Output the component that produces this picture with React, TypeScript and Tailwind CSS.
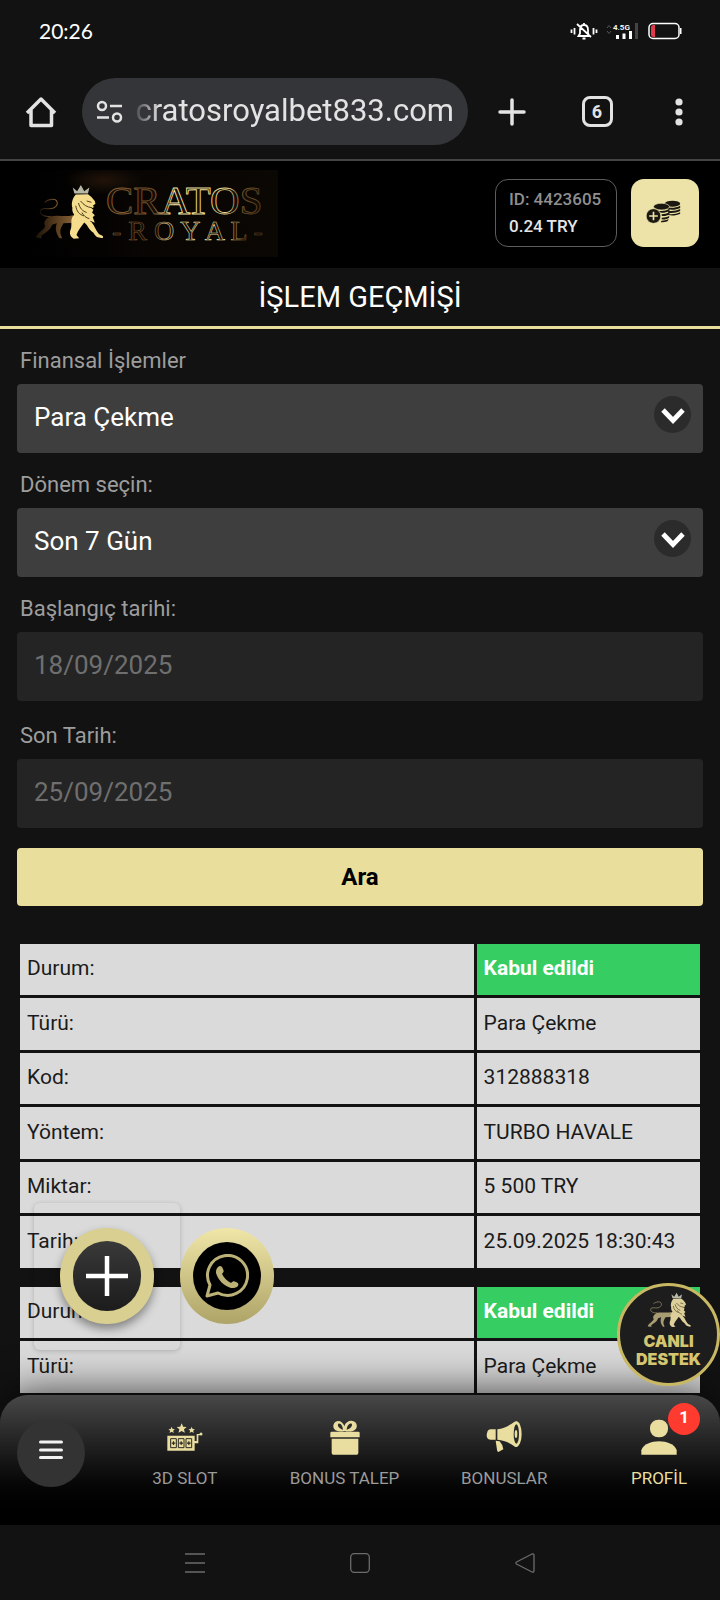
import { useState } from 'react'
import type { ReactNode } from 'react'

const FIELD = 'block h-[69px] w-full rounded-sm pl-[17px] pb-[3px] text-[26px] outline-none'

const TRANSACTIONS = [
  {
    status: 'Kabul edildi',
    rows: [
      ['Türü:', 'Para Çekme'],
      ['Kod:', '312888318'],
      ['Yöntem:', 'TURBO HAVALE'],
      ['Miktar:', '5 500 TRY'],
      ['Tarih:', '25.09.2025 18:30:43'],
    ],
  },
  {
    status: 'Kabul edildi',
    rows: [['Türü:', 'Para Çekme']],
  },
]

function LionShape({ fill, dim }: { fill: string; dim: string }) {
  return (
    <g>
      <path
        d="M52 95 C34 98 18 90 22 78 C27 66 46 78 62 70 C78 60 72 44 56 45 C46 46 38 50 34 54"
        fill="none"
        stroke={dim}
        strokeWidth="3"
      />
      <path
        d="M50 96 C34 104 30 116 36 124 C30 138 12 144 8 158 L26 160 L24 153 C36 142 50 138 56 120 L70 116 C64 132 68 146 78 160 L86 160 L82 150 C78 138 82 128 90 116 L122 114 L118 92 C94 98 74 90 50 96Z"
        fill={dim}
      />
      <path
        d="M122 90 C106 104 118 122 110 136 C106 148 112 156 120 161 L136 160 L128 150 C132 136 144 124 152 112 C162 124 164 134 178 144 C184 156 192 160 206 159 L206 153 L194 147 C184 136 182 124 172 112Z"
        fill={fill}
      />
      <path
        d="M126 31 C116 42 112 58 116 70 C114 84 122 94 132 98 C136 108 150 110 158 120 L160 110 L170 116 L168 108 L182 114 L176 98 L182 92 L174 84 L178 76 L172 72 L180 68 L176 64 L184 58 L182 50 L172 38 L162 30Z"
        fill={fill}
      />
      <path d="M122 28 L117 10 L130 21 L141 3 L151 21 L166 10 L162 28Z" fill="#b9b7a5" />
      <path
        d="M140 50 C150 62 158 68 174 70 M134 56 C138 72 146 80 158 84 M126 64 C128 80 136 90 150 94 M144 84 C150 94 156 100 166 102 M158 50 L172 54"
        fill="none"
        stroke="#30240b"
        strokeWidth="2.5"
      />
    </g>
  )
}

function Logo() {
  return (
    <svg viewBox="0 0 248 87" className="h-[87px] w-[248px]" role="img" aria-label="Cratos Royal">
      <defs>
        <radialGradient id="glow" cx="0.3" cy="0.12" r="0.16">
          <stop offset="0" stopColor="#211409" />
          <stop offset="1" stopColor="#211409" stopOpacity="0" />
        </radialGradient>
        <linearGradient id="plate">
          <stop offset="0" stopColor="#000" />
          <stop offset="0.45" stopColor="#080503" />
          <stop offset="1" stopColor="#0b0703" />
        </linearGradient>
        <linearGradient id="ink" gradientUnits="userSpaceOnUse" x1="78" x2="236" y1="0" y2="0">
          <stop offset="0" stopColor="#8a6236" />
          <stop offset="0.28" stopColor="#6e4a28" />
          <stop offset="0.42" stopColor="#fff0b0" />
          <stop offset="0.75" stopColor="#eed98f" />
          <stop offset="0.86" stopColor="#6d4f28" />
          <stop offset="1" stopColor="#533a1e" />
        </linearGradient>
        <linearGradient id="hide">
          <stop offset="0" stopColor="#1c1208" />
          <stop offset="1" stopColor="#8a6234" />
        </linearGradient>
      </defs>
      <rect width="248" height="87" fill="url(#plate)" />
      <rect width="248" height="87" fill="url(#glow)" />
      <svg x="3" y="14" width="72" height="56" viewBox="0 0 212 165">
        <LionShape fill="#f5dd8d" dim="url(#hide)" />
      </svg>
      <g fontFamily="Liberation Serif, serif" fill="#140c05" stroke="url(#ink)">
        <text x="76" y="44" fontSize="41" strokeWidth="0.9">CRATOS</text>
        <text x="82" y="70" fontSize="28" strokeWidth="0.6">- R O Y A L -</text>
      </g>
    </svg>
  )
}

function StatusBar() {
  return (
    <div className="flex h-16 items-center justify-between pr-[38px] pb-0.5 pl-[39px] text-white">
      <span className="font-['Lato',sans-serif] text-[21px]">20:26</span>
      <div className="flex items-center gap-2">
        <svg viewBox="0 0 28 20" className="h-5 w-7" fill="none" stroke="#fff" strokeWidth="1.8">
          <path d="M1.5 8.5v3.500M4.500 7v6.500M23.500 7v6.500M26.500 8.500v3.500" />
          <path d="M8.500 15h11l-1.500-2.500V9c0-3-1.500-5-4-5s-4 2-4 5v3.500zM14 4V2M12.500 17.500h3M7 3l14 13" />
        </svg>
        <svg viewBox="0 0 34 20" className="h-5 w-[34px]" fill="#fff">
          <path d="M1 7l2-2.500L5 7M1 10l2 2.500L5 10" fill="none" stroke="#555" />
          <text x="7" y="9" fontSize="8" fontWeight="600" fontFamily="Roboto, sans-serif">4.5G</text>
          <path d="M10 14h3v4h-3zM16.500 12.500h3V18h-3zM23 10h3v8h-3z" />
          <path d="M29 2h3v16h-3z" fill="#444" />
        </svg>
        <svg viewBox="0 0 34 20" className="h-5 w-[34px]">
          <rect x="1" y="2.500" width="30" height="15" rx="4" fill="none" stroke="#fff" strokeWidth="1.5" />
          <path d="M7 4v12H5.500A2.500 2.500 0 0 1 3 13.500v-7A2.500 2.500 0 0 1 5.500 4z" fill="#e0394a" />
          <path d="M32 7h1.500v6H32z" fill="#fff" />
        </svg>
      </div>
    </div>
  )
}

function BrowserBar() {
  return (
    <div className="flex items-center border-b-2 border-[#444] py-3.5 text-[#e3e3e3]">
      <button aria-label="Ana sayfa" className="flex w-[82px] justify-center">
        <svg viewBox="0 0 32 32" className="size-8" fill="none" stroke="currentColor" strokeWidth="3.5">
          <path d="M2 17L16 3l14 14M6 14v15.500h20.500V14" strokeLinejoin="round" />
        </svg>
      </button>
      <div className="flex h-[67px] min-w-0 flex-1 items-center rounded-full bg-[#343538] px-3.5">
        <svg viewBox="0 0 28 24" className="h-6 w-7 shrink-0" fill="none" stroke="currentColor" strokeWidth="2.5">
          <circle cx="6" cy="6" r="4" />
          <circle cx="21" cy="17.5" r="4" />
          <path d="M14 6h12M1 17.500h12" />
        </svg>
        <input
          aria-label="Adres"
          readOnly
          value="cratosroyalbet833.com"
          className="ml-2 w-full min-w-0 bg-transparent text-right text-[31px] outline-none [mask-image:linear-gradient(to_right,transparent,black_28px)]"
        />
      </div>
      <button aria-label="Yeni sekme" className="flex w-[88px] justify-center">
        <svg viewBox="0 0 28 28" className="size-7" stroke="currentColor" strokeWidth="3.5" strokeLinecap="round">
          <path d="M14 2v24M2 14h24" />
        </svg>
      </button>
      <button aria-label="Sekmeler" className="flex w-[82px] justify-center">
        <span className="flex size-[31px] items-center justify-center rounded-lg border-[3px] border-current text-lg font-bold">
          6
        </span>
      </button>
      <button aria-label="Menü" className="flex w-[82px] justify-center">
        <svg viewBox="0 0 8 28" className="h-7 w-2" fill="currentColor">
          <circle cx="4" cy="4" r="3.6" />
          <circle cx="4" cy="14" r="3.6" />
          <circle cx="4" cy="24" r="3.6" />
        </svg>
      </button>
    </div>
  )
}

function CoinsIcon() {
  return (
    <svg viewBox="0 0 104 72" className="h-6 w-[35px]">
      <g fill="#1a1810">
        <ellipse cx="79" cy="11" rx="23" ry="9" />
        <path d="M58 20c14 5 30 4 44-3v7c-12 6-28 7-38 3zM66 32c12 2 26 0 36-5v6c-10 5-24 7-36 5zM66 42c12 2 26 0 36-5v4c-10 5-24 7-36 4z" />
        <ellipse cx="46" cy="20" rx="24" ry="10" stroke="#ede2a8" strokeWidth="2" />
        <path d="M36 32c12 2 24 0 34-6v6c-8 5-18 7-26 6zM46 43c9 0 17-2 24-6v6c-6 4-14 6-23 5zM47 53c8 0 16-2 22-5v5c-6 4-14 6-23 5zM46 62c8 0 14-2 22-5l-4 7c-6 2-12 3-20 3z" />
        <circle cx="22" cy="48" r="22" stroke="#ede2a8" strokeWidth="2" />
      </g>
      <path d="M22 35v26M9 48h26" stroke="#ede2a8" strokeWidth="5" />
    </svg>
  )
}

function SiteHeader() {
  return (
    <header className="flex h-[107px] items-center bg-black pr-[21px] pb-[3px] pl-[30px]">
      <a href="#" className="mr-auto">
        <Logo />
      </a>
      <div className="flex h-[68px] w-[122px] flex-col justify-center rounded-[13px] border border-[#5d5d5d] pl-[13px] text-[17px] leading-[27px] font-medium">
        <span className="text-[#8f8f8f]">ID: 4423605</span>
        <span className="text-[#e6e6e6]">0.24 TRY</span>
      </div>
      <button
        aria-label="Para yatır"
        className="ml-3.5 flex size-[68px] items-center justify-center rounded-[13px] bg-[#ede2a8] pr-1 pb-0.5"
      >
        <CoinsIcon />
      </button>
    </header>
  )
}

function Field({ id, label, children }: { id: string; label: string; children: ReactNode }) {
  return (
    <div className="pt-[18px]">
      <label htmlFor={id} className="mb-[9px] block pl-[3px] text-[22px] leading-7 text-[#9d9d9d]">
        {label}
      </label>
      {children}
    </div>
  )
}

interface SelectProps {
  id: string
  label: string
  options: string[]
}

function SelectField({ id, label, options }: SelectProps) {
  const [value, setValue] = useState(options[0])

  return (
    <Field id={id} label={label}>
      <div className="relative">
        <select
          id={id}
          value={value}
          onChange={(e) => setValue(e.target.value)}
          className={`${FIELD} appearance-none bg-[#3e3e3e] text-white`}
        >
          {options.map((o) => (
            <option key={o}>{o}</option>
          ))}
        </select>
        <span className="pointer-events-none absolute top-3 right-3 flex size-[37px] items-center justify-center rounded-full bg-[#2b2b2b]">
          <svg viewBox="0 0 24 16" className="mt-0.5 h-4 w-6" fill="none" stroke="#fff" strokeWidth="4.8">
            <path d="M2 2l10 10.500L22 2" />
          </svg>
        </span>
      </div>
    </Field>
  )
}

function DateField({ id, label, value }: { id: string; label: string; value: string }) {
  return (
    <div className="pb-[3px]">
      <Field id={id} label={label}>
        <input id={id} disabled value={value} className={`${FIELD} bg-[#242424] text-[#6f6f6f]`} />
      </Field>
    </div>
  )
}

function TransactionTable({ status, rows }: { status: string; rows: string[][] }) {
  return (
    <table className="mb-[13px] w-full table-fixed border-separate border-spacing-[3px] text-left text-[21px] leading-7 text-[#1b1b1b]">
      <tbody>
        <tr className="h-[51px]">
          <th scope="row" className="w-[67%] bg-[#dadada] px-[7px] pb-[3px] font-normal">Durum:</th>
          <td className="bg-[#36cd62] px-[7px] pb-[3px] font-bold text-white">{status}</td>
        </tr>
        {rows.map(([name, value]) => (
          <tr key={name} className="odd:h-[51px] even:h-[52px]">
            <th scope="row" className="bg-[#dadada] px-[7px] pb-[3px] font-normal">{name}</th>
            <td className="bg-[#dadada] px-[7px] pb-[3px]">{value}</td>
          </tr>
        ))}
      </tbody>
    </table>
  )
}

function FloatingButtons() {
  return (
    <>
      <div className="absolute bottom-[175px] left-[34px] flex items-center">
        <div className="flex h-[147px] w-[146px] items-center justify-center rounded-md pb-0.5 shadow-[0_1px_5px_rgba(0,0,0,0.2)]">
          <button
            aria-label="Aç"
            className="flex h-24 w-[94px] items-center justify-center rounded-full bg-[#d8cf90] shadow-[0_5px_10px_rgba(0,0,0,0.4)]"
          >
            <span className="flex h-[70px] w-[68px] items-center justify-center rounded-full bg-linear-to-b from-[#393939] to-[#1c1c1c]">
              <svg viewBox="0 0 42 42" className="size-[42px]" stroke="#fff" strokeWidth="4.5">
                <path d="M21 1v40M0 21h42" />
              </svg>
            </span>
          </button>
        </div>
        <a
          href="#whatsapp"
          aria-label="WhatsApp"
          className="mb-0.5 flex h-24 w-[94px] items-center justify-center rounded-full bg-linear-to-b from-[#efe6a8] to-[#afa468]"
        >
          <span className="flex size-[68px] items-center justify-center rounded-full bg-black">
            <svg viewBox="0 0 44 44" className="size-11" fill="none" stroke="#bcb277" strokeWidth="3">
              <path d="M2 42l3-11a20 20 0 1 1 8 8z" strokeLinejoin="round" />
              <path
                d="M13 13c2-2 4-1 5 2 1 2 1 3-1 5 2 4 5 7 9 9 2-2 3-2 5-1 3 1 3 3 1 5-2 1-4 1-6 1-7-2-13-8-15-15 0-2 0-4 2-6z"
                fill="#bcb277"
                stroke="none"
              />
            </svg>
          </span>
        </a>
      </div>
      <button className="absolute right-0 bottom-[139px] flex size-[103px] flex-col items-center rounded-full border-[3px] border-[#c9b863] bg-[#1d1d1d] pt-1.5 font-['Inter',sans-serif] text-[16px] leading-[18px] font-black text-[#d5c571]">
        <svg viewBox="0 0 212 165" className="mb-1 h-9 w-[46px]">
          <LionShape fill="#ddd09a" dim="#a89c72" />
        </svg>
        <span>CANLI</span>
        <span>DESTEK</span>
      </button>
    </>
  )
}

const STAR = 'M0 -15l4.500 10 10.500 1-8 7 2.500 10.500L0 8l-9.500 5.500L-7 3l-8-7 10.500-1z'

const NAV_ITEMS = [
  {
    label: '3D SLOT',
    icon: (
      <>
        <path d={STAR} transform="translate(44 28)" />
        <path d={STAR} transform="translate(14 33) scale(.65)" />
        <path d={STAR} transform="translate(74 33) scale(.65)" />
        <path d="M1 50h82v45H1zM83 66h6V45h10v4h-5v24H83z" />
        <circle cx="102" cy="45" r="4.5" />
        <path d="M11 59h17v27H11zM34 59h17v27H34zM57 59h17v27H57z" fill="none" stroke="#2b2920" strokeWidth="3" />
        <path d="M19.500 67v11M14 72.500h11M42.500 67v11M37 72.500h11M65.500 67v11M60 72.500h11" stroke="#2b2920" strokeWidth="3.5" />
      </>
    ),
  },
  {
    label: 'BONUS TALEP',
    icon: (
      <>
        <path d="M52 36C28 42 15 30 20 16C27 0 47 4 52 22C57 4 79 0 88 14C94 30 80 42 52 36Z" />
        <path d="M48 32C36 28 30 20 34 14C42 12 47 22 48 32ZM59 32C60 20 67 12 74 14C78 20 70 29 59 32Z" fill="#2f2e28" />
        <path d="M14 38h80q4 0 4 4v13H10V42q0-4 4-4z" />
        <path d="M14 59h80v43q0 5-5 5H19q-5 0-5-5z" />
      </>
    ),
  },
  {
    label: 'BONUSLAR',
    icon: (
      <>
        <path d="M29 31v31H14C4 62 0 54 3 42C5 34 9 31 14 31Z" />
        <path d="M34 31C54 29 68 20 86 8H94V84H88C70 70 54 64 34 62Z" />
        <ellipse cx="91" cy="45" rx="16" ry="38" />
        <ellipse cx="91" cy="45" rx="8" ry="29" fill="#292926" />
        <ellipse cx="90" cy="45" rx="4" ry="12" />
        <path d="M29 65L41 67Q52 79 52 91L37 99Q33 98 33 92Z" />
      </>
    ),
  },
  {
    label: 'PROFİL',
    active: true,
    badge: 1,
    icon: (
      <>
        <rect x="27" y="2" width="54" height="53" rx="25" />
        <path d="M1 107V94C7 75 31 67 54 67C77 67 101 75 107 94V107Z" />
      </>
    ),
  },
]

function BottomNav() {
  return (
    <nav className="absolute inset-x-0 bottom-0 flex h-[130px] items-start gap-10 rounded-t-[28px] bg-linear-to-b from-[#484848] to-black pt-6 pr-1.5 pl-[17px] shadow-[0_0_45px_rgba(0,0,0,0.8)]">
      <button aria-label="Menü" className="flex size-[68px] shrink-0 items-center justify-center rounded-full bg-[#333]">
        <svg viewBox="0 0 24 20" className="mb-1.5 h-5 w-6" stroke="#f2f2f2" strokeWidth="3" strokeLinecap="round">
          <path d="M1.500 2h21M1.500 10h21M1.500 17.500h21" />
        </svg>
      </button>
      {NAV_ITEMS.map(({ label, icon, active, badge }) => (
        <a
          key={label}
          href="#"
          className={
            active
              ? 'relative flex w-[110px] flex-col items-center text-[17px] text-[#e9dea0]'
              : 'relative flex min-w-0 flex-1 flex-col items-center text-[17px] whitespace-nowrap text-[#9b9b9b]'
          }
        >
          <svg viewBox="0 0 108 108" className="mb-[11px] size-9" fill="#e9dea0">
            {icon}
          </svg>
          {label}
          {badge && (
            <span className="absolute -top-4 right-3.5 flex size-8 items-center justify-center rounded-full bg-[#ff3b30] pb-0.5 font-bold text-white">
              {badge}
            </span>
          )}
        </a>
      ))}
    </nav>
  )
}

function SystemNav() {
  return (
    <div className="flex h-[75px] shrink-0 items-center justify-center gap-[145px] text-[#6c6c6c]">
      <svg viewBox="0 0 20 20" className="size-5" stroke="currentColor" strokeWidth="1.5">
        <path d="M0 1h20M0 10h20M0 19h20" />
      </svg>
      <svg viewBox="0 0 20 20" className="size-5" fill="none" stroke="currentColor" strokeWidth="1.3">
        <rect x="0.7" y="0.7" width="18.6" height="18.6" rx="3.5" />
      </svg>
      <svg viewBox="0 0 20 20" className="size-5" fill="none" stroke="currentColor" strokeWidth="1.3">
        <path d="M1.500 9L17 1q2-.5 2 1.500v15q0 2-2 1.500L1.500 11q-1.200-1 0-2z" />
      </svg>
    </div>
  )
}

export default function App() {
  return (
    <div className="flex h-dvh flex-col bg-[#121212] font-['Roboto','Noto_Sans',sans-serif]">
      <StatusBar />
      <BrowserBar />
      <div className="relative flex min-h-0 flex-1 flex-col overflow-hidden">
        <SiteHeader />
        <h1 className="border-b-[3px] border-[#e9de9c] text-center text-[29px] leading-[58px] text-white">
          İŞLEM GEÇMİŞİ
        </h1>
        <main className="min-h-0 flex-1 overflow-y-auto px-[17px] [scrollbar-width:none]">
          <form onSubmit={(e) => e.preventDefault()}>
            <SelectField id="type" label="Finansal İşlemler" options={['Para Çekme', 'Para Yatırma']} />
            <SelectField id="period" label="Dönem seçin:" options={['Son 7 Gün', 'Son 30 Gün']} />
            <DateField id="start" label="Başlangıç tarihi:" value="18/09/2025" />
            <DateField id="end" label="Son Tarih:" value="25/09/2025" />
            <button className="mt-[17px] mb-[35px] h-[58px] w-full rounded-sm bg-[#e9de9c] text-2xl font-bold text-black">
              Ara
            </button>
          </form>
          {TRANSACTIONS.map((t, i) => (
            <TransactionTable key={i} {...t} />
          ))}
        </main>
        <BottomNav />
        <FloatingButtons />
      </div>
      <SystemNav />
    </div>
  )
}
